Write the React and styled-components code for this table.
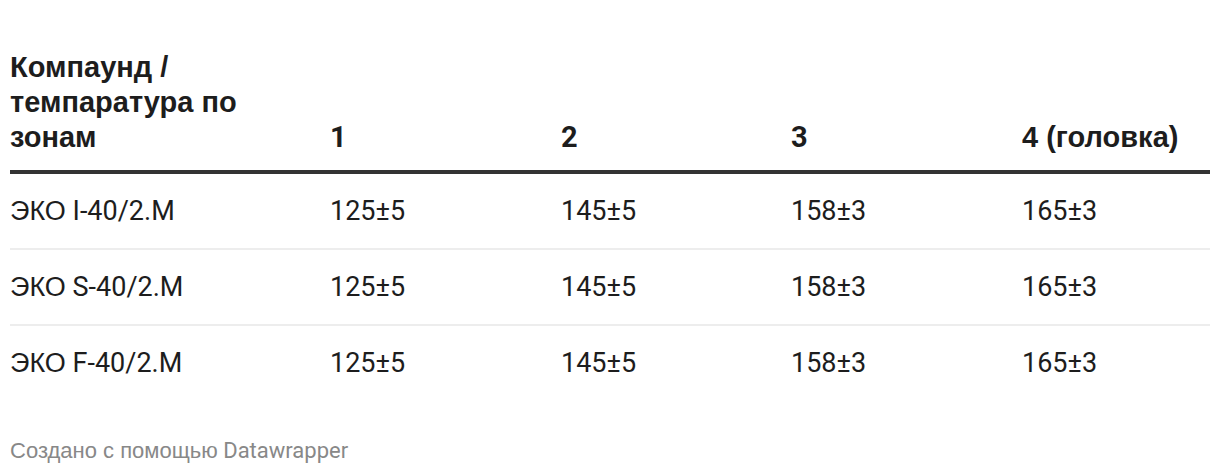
import React from 'react';
import styled, { createGlobalStyle } from 'styled-components';

const GlobalStyle = createGlobalStyle`
    body {
        margin: 0;
        background: #fff;
        font-family: Roboto, "Liberation Sans", sans-serif;
        color: #1d1d1d;
    }
`;

const Page = styled.div`
    width: 1220px;
    height: 476px;
    padding: 50px 10px 0;
    box-sizing: border-box;
`;

const Grid = styled.div`
    display: grid;
    grid-template-columns: 320px 231px 230px 231px 1fr;
`;

const HeadCell = styled.div`
    display: flex;
    align-items: flex-end;
    font-size: 29px;
    font-weight: 700;
    line-height: 35px;
    padding: 0 ${({ $wide }) => ($wide ? '60px' : '0')} 15px 0;
    border-bottom: 4px solid #333;
`;

const Cell = styled.div`
    display: flex;
    align-items: center;
    height: 74px;
    font-size: 27px;
    border-bottom: ${({ $last }) => ($last ? 'none' : '2px solid #ededed')};
`;

// cyrillic falls back to a helvetica-like face in the original
const Cyr = styled.span`
    font-family: "Liberation Sans", Arial, sans-serif;
`;

const Footer = styled.div`
    margin-top: 38px;
    font-size: 22px;
    color: #888;
`;

const headers = [
    <Cyr>Компаунд / темпаратура по зонам</Cyr>,
    '1',
    '2',
    '3',
    <Cyr>4 (головка)</Cyr>,
];

const rows = [
    ['I-40/2.M', '125±5', '145±5', '158±3', '165±3'],
    ['S-40/2.M', '125±5', '145±5', '158±3', '165±3'],
    ['F-40/2.M', '125±5', '145±5', '158±3', '165±3'],
];

export default function App() {
    return (
        <>
            <GlobalStyle />
            <Page>
                <Grid>
                    {headers.map((h, i) => (
                        <HeadCell key={i} $wide={i === 0}><span>{h}</span></HeadCell>
                    ))}
                    {rows.map((r, ri) =>
                        r.map((c, ci) => (
                            <Cell key={ri + '-' + ci} $last={ri === rows.length - 1}>
                                <span>{ci === 0 ? <><Cyr>ЭКО</Cyr> {c}</> : c}</span>
                            </Cell>
                        ))
                    )}
                </Grid>
                <Footer>
                    <Cyr>Создано с помощью</Cyr> Datawrapper
                </Footer>
            </Page>
        </>
    );
}
